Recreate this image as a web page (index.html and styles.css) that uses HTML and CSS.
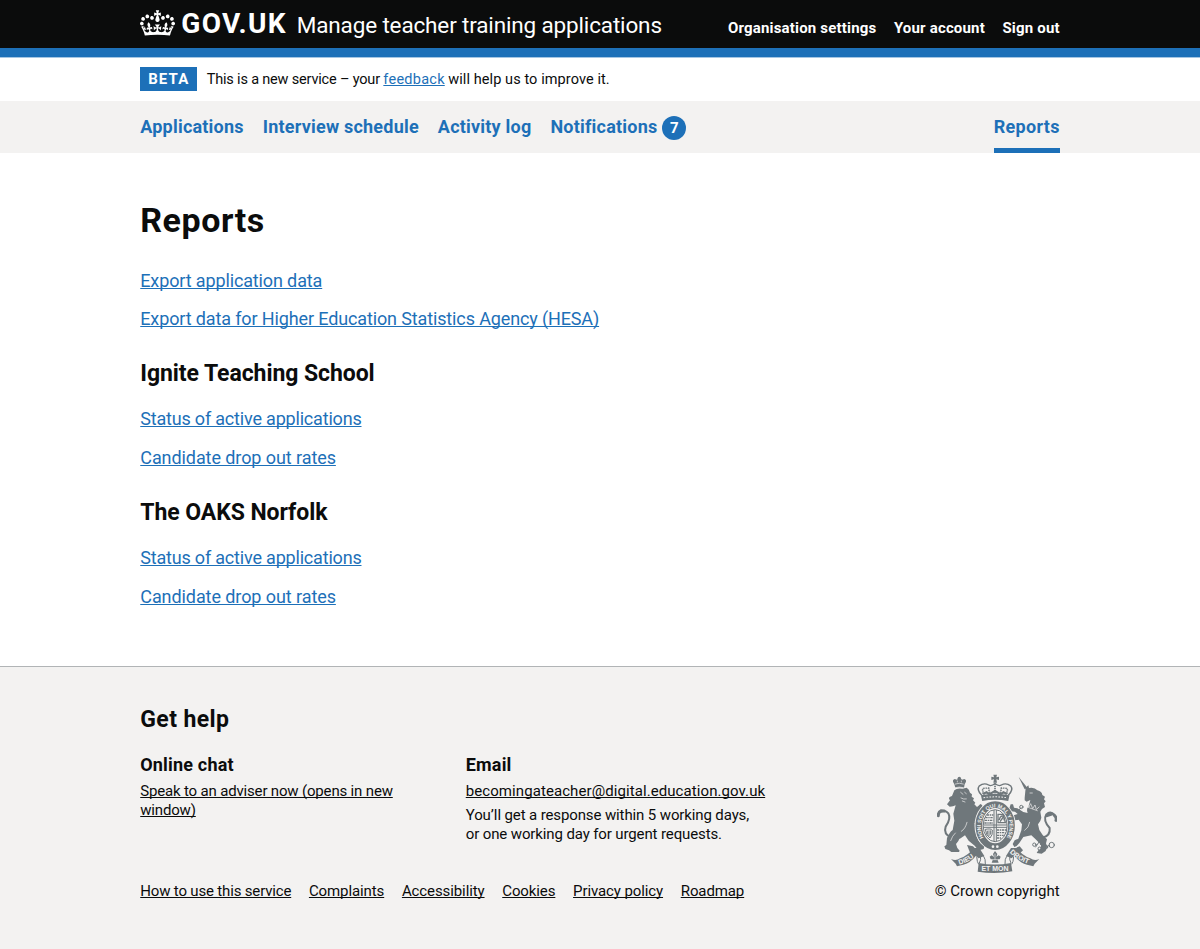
FILE: index.html
```html
<!DOCTYPE html>
<html lang="en">
<head>
<meta charset="utf-8">
<title>Reports - Manage teacher training applications</title>
<link rel="stylesheet" href="styles.css">
</head>
<body>
<header class="header">
  <div class="container header-row">
    <a class="logo" href="#">
      <svg class="logo-crown" viewBox="0 0 132 97" aria-hidden="true"><path fill="currentColor" fill-rule="evenodd" d="M25 30.2c3.5 1.5 7.7-.2 9.1-3.7 1.5-3.6-.2-7.8-3.9-9.2-3.6-1.4-7.6.3-9.1 3.9-1.4 3.5.3 7.5 3.9 9zM9 39.5c3.6 1.5 7.8-.2 9.2-3.7 1.5-3.6-.2-7.8-3.9-9.1-3.6-1.5-7.6.2-9.1 3.8-1.4 3.5.3 7.5 3.8 9zM4.4 57.2c3.5 1.5 7.7-.2 9.1-3.8 1.5-3.6-.2-7.7-3.9-9.1-3.5-1.5-7.6.3-9.1 3.8-1.4 3.5.3 7.6 3.9 9.1zm38.3-21.4c3.5 1.5 7.7-.2 9.1-3.8 1.5-3.6-.2-7.7-3.9-9.1-3.6-1.5-7.6.3-9.1 3.8-1.3 3.6.4 7.7 3.9 9.1zm64.4-5.6c-3.6 1.5-7.8-.2-9.1-3.7-1.5-3.6.2-7.8 3.8-9.2 3.6-1.4 7.7.3 9.2 3.9 1.3 3.5-.4 7.5-3.9 9zm15.9 9.3c-3.6 1.5-7.7-.2-9.1-3.7-1.5-3.6.2-7.8 3.7-9.1 3.6-1.5 7.7.2 9.2 3.8 1.5 3.5-.3 7.5-3.8 9zm4.7 17.7c-3.6 1.5-7.8-.2-9.2-3.8-1.5-3.6.2-7.7 3.9-9.1 3.6-1.5 7.7.3 9.2 3.8 1.3 3.5-.4 7.6-3.9 9.1zM89.3 35.8c-3.6 1.5-7.8-.2-9.2-3.8-1.4-3.6.2-7.7 3.9-9.1 3.6-1.5 7.7.3 9.2 3.8 1.4 3.6-.3 7.7-3.9 9.1zM69.7 17.7l8.9 4.7V9.3l-8.9 2.8c-.2-.3-.5-.6-.9-.9L72.4 0H59.6l3.5 11.2c-.3.3-.6.5-.9.9l-8.8-2.8v13.1l8.8-4.7c.3.3.6.7.9.9l-5 15.4v.1c-.2.8-.4 1.6-.4 2.4 0 4.1 3.1 7.5 7 8.1h.2c.3 0 .7.1 1 .1.4 0 .7 0 1-.1h.2c4-.6 7.1-4.1 7.1-8.1 0-.8-.1-1.7-.4-2.4V34l-5.1-15.4c.4-.2.7-.6 1-.9zM66 92.8c16.9 0 32.8 1.1 47.1 3.2 4-16.9 8.9-26.7 14-33.5l-9.6-3.4c1 4.9 1.1 7.2 0 10.2-1.5-1.4-3-4.3-4.2-8.7L108.6 76c2.8-2 5-3.2 7.5-3.3-4.4 9.4-10 11.9-13.6 11.2-4.3-.8-6.3-4.6-5.6-7.9 1-4.7 5.7-5.9 8-.5 4.3-8.7-3-11.4-7.6-8.8 7.1-7.2 7.9-13.5 2.1-21.1-8 6.1-8.1 12.3-4.5 20.8-4.7-5.4-12.1-2.5-9.5 6.2 3.4-5.2 7.9-2 7.2 3.1-.6 4.3-6.4 7.8-13.5 7.2-10.3-.9-10.9-8-11.2-13.8 2.5-.5 7.1 1.8 11 7.3L80.2 60c-4.1 4.4-8 5.3-12.3 5.4 1.4-4.4 8-11.6 8-11.6H55.5s6.4 7.2 7.9 11.6c-4.2-.1-8-1-12.3-5.4l1.4 16.4c3.9-5.5 8.5-7.7 10.9-7.3-.3 5.8-.9 12.8-11.1 13.8-7.2.6-12.9-2.9-13.5-7.2-.7-5 3.8-8.3 7.1-3.1 2.7-8.7-4.6-11.6-9.4-6.2 3.7-8.5 3.6-14.7-4.6-20.8-5.8 7.6-5 13.9 2.2 21.1-4.7-2.6-11.9.1-7.7 8.8 2.3-5.5 7.1-4.2 8.1.5.7 3.3-1.3 7.1-5.7 7.9-3.5.7-9-1.8-13.5-11.2 2.5.1 4.7 1.3 7.5 3.3l-4.7-15.4c-1.2 4.4-2.7 7.2-4.3 8.7-1.1-3-.9-5.3 0-10.2l-9.5 3.4c5 6.9 9.9 16.7 14 33.5 14.8-2.1 30.8-3.2 47.7-3.2z"/></svg>
      <span class="logo-text">GOV.UK</span>
      <span class="product">Manage teacher training applications</span>
    </a>
    <nav class="account">
      <a href="#">Organisation settings</a>
      <a href="#">Your account</a>
      <a href="#">Sign out</a>
    </nav>
  </div>
</header>

<div class="container phase">
  <strong class="tag">BETA</strong>
  <span class="phase-text">This is a new service – your <a class="link" href="#">feedback</a> <span class="phase-tail">will help us to improve it.</span></span>
</div>

<nav class="primary">
  <div class="container primary-row">
    <a href="#">Applications</a>
    <a href="#">Interview schedule</a>
    <a href="#">Activity log</a>
    <a class="with-count" href="#">Notifications <span class="count">7</span></a>
    <a class="current" href="#">Reports</a>
  </div>
</nav>

<main class="container main">
  <h1>Reports</h1>
  <ul class="list">
    <li><a class="link" href="#">Export application data</a></li>
    <li><a class="link" href="#">Export data for Higher Education Statistics Agency (HESA)</a></li>
  </ul>
  <h2>Ignite Teaching School</h2>
  <ul class="list">
    <li><a class="link link-status" href="#">Status of active applications</a></li>
    <li><a class="link link-rates" href="#">Candidate drop out rates</a></li>
  </ul>
  <h2>The OAKS Norfolk</h2>
  <ul class="list">
    <li><a class="link link-status" href="#">Status of active applications</a></li>
    <li><a class="link link-rates" href="#">Candidate drop out rates</a></li>
  </ul>
</main>

<footer class="footer">
  <div class="container">
    <h2 class="footer-title">Get help</h2>
    <div class="footer-main">
      <section class="chat">
        <h3>Online chat</h3>
        <p><a class="speak" href="#">Speak to an adviser now (opens in new window)</a></p>
      </section>
      <section class="email">
        <h3>Email</h3>
        <p><a class="address" href="#">becomingateacher@digital.education.gov.uk</a></p>
        <p>You’ll get a response within 5 working days,<br>or one working day for urgent requests.</p>
      </section>
      <svg class="crest" viewBox="36 27 360 297" aria-hidden="true">
        <defs>
          <path id="garter" d="M189 234A43 57 0 1 1 232 234"/>
          <path id="dieu" d="M103 299Q134 292 160 264"/>
          <path id="droit" d="M254 262Q282 292 330 302"/>
        </defs>
        <g fill="currentColor">
          <!-- lion -->
          <path d="M88 58l-4-8q-2-6 5-8l7 2 4-4h7l4 4 7-2q7 2 5 8l-4 8-2 10q-14-3-26 0z"/>
          <circle cx="103" cy="40" r="5"/>
          <path d="M88 76q8-8 24-5l13-3q8 4 10 15l6 5-1 7 7 5-3 6 7 7-3 5 8 8 4-3 6-6q5 1 7 7l-7 16-6 18-4 18-8-3q2 14 12 23l-7 15 8 16q7 11 12 11l5 5-2 9-14 4q-8-7-13-14l-18-15-11-16-13 9q-5 1-7 8l-7 9 4 12 7 8-2 4H79l-7-5-11-4-3-8 6-4 2-21q7-17 17-24l5-28-3-21 7-25-8 3-10 1-8-7 9-12q-5-4-2-9 4-3 8-4z"/>
          <path d="M130 196l18 2 10 7-4 9-20 3zM140 150l21 10 3 8-12 8-16-6z"/>
          <path d="M126 240l18 4 14 14 2 8-14 3-12-9z"/>
          <!-- unicorn -->
          <path d="M281 36l26 32-8 5z"/>
          <path d="M302 68l8-7 2 8q17-3 25 7 14 3 15 14l8 5-3 8 5 6-5 6 3 11-9 6-5 8 3 18q-2 12-10 20l4 17 10 15 13 13-3 12 3 11-4 12-12 8-15-2 5-8 7-5 1-12-17-17-12-11-24 5-12 18-8 9-7 3-5-9 6-11 11-5 9-25 2-18-10-14-17 3-3 13-6-4-2-17 8-7 17-5-8-7-12-1-5-9 4-12 7 0 3 10 10 2 18 11 13 3q-5-12 3-22l5-17-11 5-6-4 0-8z"/>
          <path d="M284 244l-8 3-10 12 2 8 14 1 12-12z"/>
        </g>
        <g fill="none" stroke="currentColor" stroke-linecap="round">
          <path stroke-width="6" d="M80 218q-26-10-18-33 17-24 8-40-9-12-26-3"/>
          <path stroke-width="6" d="M352 218q25-5 22-29-21-22-10-41 12-12 24 1"/>
          <path stroke-width="9" d="M40 152q-1-10 9-15l9 1M388 151q8 7 5 15M366 152l14-5"/>
          <path stroke-width="3" d="M288 128l-9 10 9 9M348 222l-8 12-8 12M346 238l18 8 10-6"/>
          <circle cx="289" cy="126" r="5" stroke-width="3"/>
          <circle cx="328" cy="239" r="5" stroke-width="3"/>
          <circle cx="344" cy="251" r="5" stroke-width="3"/>
          <circle cx="362" cy="246" r="6" stroke-width="3"/>
          <circle cx="380" cy="240" r="8" stroke-width="3"/>
        </g>
        <!-- details cut out of the supporters -->
        <g fill="none" stroke="#f3f2f1" stroke-width="2" stroke-linecap="round">
          <path d="M91 57q12-5 24 0M91 68q12-4 24 0M97 48v3M109 48v3M107 82l7 6M119 82l5 4M108 99q8 5 16 3M112 108l8 3"/>
          <path d="M126 172q-5 20-17 27M91 204q-9 8-14 23M302 114l10 12 5-10 6 15 7-11 4 14 8-8M303 125l34 12M314 172q-2 16-15 24M315 84h7"/>
        </g>
        <!-- royal crown -->
        <path fill="currentColor" d="M205 29h11l-2 8 8-2v10l-8-2 2 10h-11l2-10-8 2V35l8 2z"/>
        <g transform="translate(210 0) scale(1.28 1) translate(-210 0)">
          <path fill="currentColor" d="M177 91q33-9 67 0l-3 17q-31-7-61 0z"/>
          <g fill="none" stroke="currentColor">
            <path stroke-width="3.500" d="M179 91q-13-17-6-28 11-11 22-3 7 5 15-5 8 10 15 5 11-8 22 3 7 11-6 28"/>
            <path stroke-width="4" stroke-dasharray="4 2" d="M186 88q-8-11-3-18l12-1 3 18M234 88q8-11 3-18l-12-1-3 18M210 57v31"/>
            <path stroke-width="6" d="M181 87l9-5 7 6 13-10 13 10 7-6 9 5"/>
          </g>
          <path d="M183 98q27-5 54 0" fill="none" stroke="#f3f2f1" stroke-width="3" stroke-dasharray="4 3"/>
        </g>
        <!-- garter -->
        <ellipse cx="210.500" cy="182" rx="62" ry="75" fill="#f3f2f1"/>
        <ellipse cx="210.500" cy="182" rx="49" ry="63" fill="none" stroke="currentColor" stroke-width="20"/>
        <text class="garter-text"><textPath href="#garter" startOffset="50%" text-anchor="middle">HONI SOIT QUI MAL Y PENSE</textPath></text>
        <circle cx="204" cy="245" r="4" fill="#f3f2f1"/><circle cx="217" cy="245" r="4" fill="#f3f2f1"/>
        <!-- shield -->
        <g fill="none" stroke="currentColor">
          <ellipse cx="210.500" cy="182" rx="36" ry="48" stroke-width="3"/>
          <path stroke-width="3" d="M207 135v94M214 135v94M175 180h71M175 187h71"/>
          <path stroke-width="4" stroke-dasharray="7 2 4 2" d="M186 150h19M181 158h24M179 166h26M178 174h26M216 195h28M216 203h25M216 211h20M216 219h12"/>
          <path stroke-width="4" d="M219 148l16 0 6 25h-22zM223 165q2-12 9-12t5 13M225 170l10-14"/>
          <path stroke-width="3" d="M181 193q17-3 21 2 2 15-7 24-13-8-14-26M187 197v12M192 196v17M197 196v13"/>
        </g>
        <!-- ribbon -->
        <g fill="currentColor">
          <path d="M78 282q15 7 27-2 24-8 41-31h17l15 24-17 7-8-8q-16 21-38 27l-19 5-4-8z"/>
          <path d="M343 282q-15 7-27-2-24-8-41-31h-17l-15 24 17 7 8-8q16 21 38 27l19 5 4-8z"/>
          <path d="M161 294l-3 26q53 8 104-1l-4-25q-48 9-97 0z"/>
          <path d="M210 258l7 9-3 9 7-5 6 4-3 8h-7l4 10h-21l4-10h-7l-3-8 6-4 7 5-3-9z"/>
        </g>
        <g fill="none" stroke="currentColor" stroke-width="3">
          <path d="M163 294q6-8 3-24l-9-4q26 0 24 32M258 294q-6-8-3-24l9-4q-26 0-24 32M155 274q1 18 6 24M266 274q-1 18-6 24"/>
        </g>
        <path d="M210 266v18M204 284h13" fill="none" stroke="#f3f2f1" stroke-width="2"/>
        <text class="ribbon-text"><textPath href="#dieu">DIEU</textPath></text>
        <text class="ribbon-text"><textPath href="#droit">DROIT</textPath></text>
        <text class="ribbon-text" x="210" y="317" text-anchor="middle">ET MON</text>
      </svg>
    </div>
    <div class="footer-bottom">
      <nav class="footer-links">
        <a class="how-to" href="#">How to use this service</a>
        <a href="#">Complaints</a>
        <a href="#">Accessibility</a>
        <a href="#">Cookies</a>
        <a href="#">Privacy policy</a>
        <a href="#">Roadmap</a>
      </nav>
      <span class="copyright">© Crown copyright</span>
    </div>
  </div>
</footer>
</body>
</html>
```
FILE: styles.css
```css
* { box-sizing: border-box; }
body {
  margin: 0;
  background: #fff;
  color: #0b0c0c;
  font-family: Roboto, "Liberation Sans", sans-serif;
  font-size: 18px;
  line-height: 24px;
}
h1, h2, h3, p, ul { margin: 0; padding: 0; }
.container { width: 919.500px; margin: 0 auto; }
.link {
  color: #1d70b8;
  text-decoration: underline 1px;
  text-underline-offset: 1px;
  text-decoration-skip-ink: none;
}

/* Header */
.header { height: 57px; background: #0b0c0c; border-bottom: 9px solid #1d70b8; box-shadow: 0 1px 0 #a5c6e3; }
.header-row { height: 48px; display: flex; justify-content: space-between; align-items: baseline; padding-top: 7px; }
.logo { display: flex; align-items: baseline; color: #fff; text-decoration: none; line-height: 34px; }
.logo-crown { width: 35px; height: 26px; margin-right: 6px; align-self: flex-start; margin-top: 3px; }
.logo-text { font-weight: 700; font-size: 28px; letter-spacing: 1.300px; width: 115.500px; white-space: nowrap; }
.product { font-size: 22.500px; letter-spacing: -0.15px; white-space: nowrap; }
.account { display: flex; gap: 17.500px; font-size: 15px; font-weight: 700; letter-spacing: 0.18px; }
.account a { color: #fff; text-decoration: none; }

/* Phase banner */
.phase { display: flex; align-items: center; gap: 9.500px; height: 43.500px; padding-top: 0.500px; }
.tag { width: 57px; height: 24px; background: #1d70b8; color: #fff; font-size: 15px; line-height: 24px; letter-spacing: 1.100px; text-align: center; }
.phase-text { font-size: 14.500px; letter-spacing: -0.18px; padding-top: 2px; }
.phase-text .link { letter-spacing: 0.25px; }
.phase-tail { letter-spacing: 0.09px; }

/* Primary navigation */
.primary { background: #f3f2f1; height: 52.500px; }
.primary-row { display: flex; gap: 19px; height: 100%; font-weight: 700; letter-spacing: 0.21px; line-height: 52px; }
.primary a { color: #1d70b8; text-decoration: none; }
.with-count { display: flex; align-items: center; gap: 5px; }
.count { width: 24px; height: 24px; border-radius: 50%; background: #1d70b8; color: #fff; font-size: 15px; line-height: 24px; text-align: center; letter-spacing: 0; margin-top: 2px; }
.primary .current { margin-left: auto; border-bottom: 5px solid #1d70b8; letter-spacing: 0.3px; }

/* Content */
.main { padding-top: 46.500px; height: 512.500px; }
h1 { font-size: 34px; line-height: 40px; letter-spacing: 0.55px; margin-bottom: 29px; }
h2 { font-size: 23px; line-height: 29px; letter-spacing: -0.07px; margin: 28.400px 0 19.200px; }
.list { list-style: none; display: flex; flex-direction: column; gap: 14.300px; letter-spacing: -0.13px; }
.link-status { letter-spacing: -0.19px; }
.link-rates { letter-spacing: -0.08px; }

/* Footer */
.footer { background: #f3f2f1; border-top: 1px solid #b1b4b6; padding-top: 38.500px; height: 283.500px; font-size: 15px; line-height: 19.200px; letter-spacing: -0.12px; }
.footer a { color: inherit; text-decoration: underline 1px; text-underline-offset: 1px; text-decoration-skip-ink: none; }
.footer-title { margin: 0 0 19px; letter-spacing: 0.39px; }
.footer-main { display: flex; height: 121px; }
h3 { font-size: 18px; line-height: 24px; letter-spacing: 0.18px; margin-bottom: 5px; }
.chat { width: 325.500px; padding-right: 60px; }
.email p { margin-bottom: 4.600px; }
.footer .speak { letter-spacing: -0.17px; }
.address { letter-spacing: 0.08px; }
.crest { width: 120px; height: 99px; margin: 20.500px 2.500px 0 auto; color: #6f777b; }
.garter-text { font: 700 16px "Liberation Sans", sans-serif; letter-spacing: 0; fill: #f3f2f1; }
.ribbon-text { font: 700 21px "Liberation Sans", sans-serif; letter-spacing: 0; fill: #f3f2f1; }
.footer-bottom { display: flex; justify-content: space-between; padding-top: 7.500px; }
.footer-links { display: flex; gap: 17.700px; letter-spacing: -0.1px; }
.how-to { letter-spacing: -0.17px; }
.copyright { letter-spacing: 0.05px; }
```
